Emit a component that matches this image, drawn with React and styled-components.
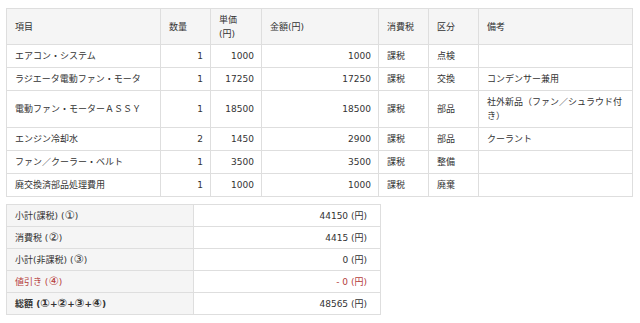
import React from 'react'
import styled, { createGlobalStyle } from 'styled-components'

const GlobalStyle = createGlobalStyle`
  body {
    margin: 0;
    padding: 8px 6px;
    background: #fff;
    color: #333;
    font-family: "DejaVu Sans", "Noto Sans CJK JP", sans-serif;
    font-size: 9px;
    line-height: 14px;
  }
`

const items = [
  { name: 'エアコン・システム', qty: 1, price: 1000, amount: 1000, tax: '課税', kind: '点検', note: '' },
  { name: 'ラジエータ電動ファン・モータ', qty: 1, price: 17250, amount: 17250, tax: '課税', kind: '交換', note: 'コンデンサー兼用' },
  { name: '電動ファン・モーターＡＳＳＹ', qty: 1, price: 18500, amount: 18500, tax: '課税', kind: '部品', note: '社外新品（ファン／シュラウド付き）' },
  { name: 'エンジン冷却水', qty: 2, price: 1450, amount: 2900, tax: '課税', kind: '部品', note: 'クーラント' },
  { name: 'ファン／クーラー・ベルト', qty: 1, price: 3500, amount: 3500, tax: '課税', kind: '整備', note: '' },
  { name: '廃交換済部品処理費用', qty: 1, price: 1000, amount: 1000, tax: '課税', kind: '廃棄', note: '' },
]

const Circ = styled.span`
  font-family: "DejaVu Sans", sans-serif;
  font-size: 11.5px;
  line-height: 1;
`

const totals = [
  { key: 'a', label: <>小計(課税) (<Circ>①</Circ>)</>, value: '44150' },
  { key: 'b', label: <>消費税 (<Circ>②</Circ>)</>, value: '4415' },
  { key: 'c', label: <>小計(非課税) (<Circ>③</Circ>)</>, value: '0' },
  { key: 'd', label: <>値引き (<Circ>④</Circ>)</>, value: '- 0', tone: 'red' },
  { key: 'e', label: <>総額 (<Circ>①</Circ>+<Circ>②</Circ>+<Circ>③</Circ>+<Circ>④</Circ>)</>, value: '48565', bold: true },
]

const Table = styled.table`
  border-collapse: collapse;
  table-layout: fixed;
  width: ${p => p.width}px;
  margin-bottom: 7px;
`

const Th = styled.th`
  background: #f5f5f5;
  border: 1px solid #dedede;
  font-weight: normal;
  text-align: left;
  vertical-align: middle;
  padding: 4px 7px 3px 8px;
`

const Td = styled.td`
  border: 1px solid #dedede;
  vertical-align: middle;
  padding: 4px 7px 4px 8px;
  text-align: ${p => (p.num ? 'right' : 'left')};
`

const Label = styled.td`
  background: #f5f5f5;
  border: 1px solid #dedede;
  padding: 4px 8px 3px;
  color: ${p => (p.tone === 'red' ? '#b5403c' : '#333')};
  font-weight: ${p => (p.bold ? 'bold' : 'normal')};
`

const Value = styled.td`
  border: 1px solid #dedede;
  padding: 4px 13px 3px 8px;
  text-align: right;
  color: ${p => (p.tone === 'red' ? '#b5403c' : '#333')};
`

const widths = [154, 50, 51, 117, 50, 50, 154]

export default function App() {
  return (
    <>
      <GlobalStyle />
      <Table width={626}>
        <colgroup>
          {widths.map((w, i) => <col key={i} style={{ width: w }} />)}
        </colgroup>
        <thead>
          <tr>
            <Th>項目</Th>
            <Th>数量</Th>
            <Th>単価<br />(円)</Th>
            <Th>金額(円)</Th>
            <Th>消費税</Th>
            <Th>区分</Th>
            <Th>備考</Th>
          </tr>
        </thead>
        <tbody>
          {items.map(item => (
            <tr key={item.name}>
              <Td>{item.name}</Td>
              <Td num>{item.qty}</Td>
              <Td num>{item.price}</Td>
              <Td num>{item.amount}</Td>
              <Td>{item.tax}</Td>
              <Td>{item.kind}</Td>
              <Td>{item.note}</Td>
            </tr>
          ))}
        </tbody>
      </Table>
      <Table width={374}>
        <colgroup>
          <col style={{ width: 187 }} />
          <col style={{ width: 187 }} />
        </colgroup>
        <tbody>
          {totals.map(t => (
            <tr key={t.key}>
              <Label tone={t.tone} bold={t.bold}>{t.label}</Label>
              <Value tone={t.tone}>{t.value} (円)</Value>
            </tr>
          ))}
        </tbody>
      </Table>
    </>
  )
}
